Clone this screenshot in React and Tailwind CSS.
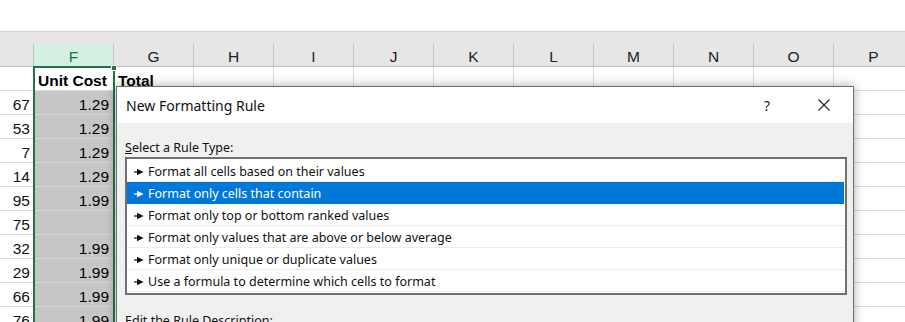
import React from "react";

const COLS = ["F", "G", "H", "I", "J", "K", "L", "M", "N", "O", "P"];
const ROWS = [
  ["67", "1.29"],
  ["53", "1.29"],
  ["7", "1.29"],
  ["14", "1.29"],
  ["95", "1.99"],
  ["75", ""],
  ["32", "1.99"],
  ["29", "1.99"],
  ["66", "1.99"],
  ["76", "1.99"],
];
const RULES = [
  "Format all cells based on their values",
  "Format only cells that contain",
  "Format only top or bottom ranked values",
  "Format only values that are above or below average",
  "Format only unique or duplicate values",
  "Use a formula to determine which cells to format",
];

function Arrow({ color }) {
  return (
    <svg width="10" height="8" viewBox="0 0 10 8" className="mr-[4px] shrink-0">
      <rect x="0" y="3.4" width="4" height="1.2" fill={color} />
      <polygon points="3,0.8 9.6,4 3,7.2" fill={color} />
    </svg>
  );
}

export default function App() {
  const sheetFont = { fontFamily: '"Liberation Sans", Arial, sans-serif' };
  const uiFont = { fontFamily: '"Noto Sans", "Open Sans", sans-serif' };
  return (
    <div className="relative h-[322px] w-[905px] overflow-hidden bg-white" style={sheetFont}>
      <div className="h-[31px] bg-white" />
      {/* column header band */}
      <div className="flex h-[36px] flex-col border-t border-[#d2d2d2] bg-[#e6e6e6]">
        <div className="h-[12px]" />
        <div className="flex h-[23px] border-b border-[#bdbdbd]">
          <div className="w-[33px] shrink-0" />
          {COLS.map((c, i) => (
            <div
              key={c}
              className={
                "flex w-[80px] shrink-0 items-center justify-center border-l pt-[3px] text-[15.5px] " +
                (i === 0
                  ? "border-[#bdbdbd] bg-[#d3f0e0] text-[#217346]"
                  : "border-[#c6c6c6] text-[#222]")
              }
            >
              {c}
            </div>
          ))}
        </div>
      </div>
      {/* header row */}
      <div className="flex h-[24px]">
        <div className="w-[33px] shrink-0 border-b border-[#dadada]" />
        <div className="flex w-[80px] shrink-0 items-center border-b border-l border-[#dadada] pl-[4px] pt-[4px] text-[15.5px] font-bold text-black">
          Unit Cost
        </div>
        <div className="flex w-[80px] shrink-0 items-center border-b border-l border-[#dadada] pl-[4px] pt-[4px] text-[15.5px] font-bold text-black">
          Total
        </div>
        {COLS.slice(2).map((c) => (
          <div key={c} className="w-[80px] shrink-0 border-b border-l border-[#dadada]" />
        ))}
      </div>
      {ROWS.map(([n, v], r) => (
        <div key={r} className="flex h-[24px]">
          <div className="flex w-[33px] shrink-0 items-center justify-end border-b border-[#dadada] pr-[3px] pt-[4px] text-[15.5px] text-[#111]">
            {n}
          </div>
          <div className="flex w-[80px] shrink-0 items-center justify-end border-b border-l border-[#d6d6d6] bg-[#c6c6c6] pr-[4px] pt-[4px] text-[15.5px] text-black">
            {v}
          </div>
          {COLS.slice(1).map((c) => (
            <div key={c} className="w-[80px] shrink-0 border-b border-l border-[#dadada]" />
          ))}
        </div>
      ))}

      {/* selection border */}
      <div className="absolute left-[33px] top-[66px] h-[300px] w-[82px] border-2 border-[#217346]" />
      <div className="absolute left-[111px] top-[65px] h-[6px] w-[6px] border border-white bg-[#217346]" />

      {/* dialog */}
      <div
        className="absolute left-[116px] top-[86px] h-[270px] w-[738px] border border-[#6f6f6f] bg-[#f0f0f0] shadow-[0_0_10px_rgba(0,0,0,0.35)]"
        style={uiFont}
      >
        <div className="flex h-[36px] items-center bg-white pl-[9px] text-[14px] text-[#111]">
          <span className="flex-1">New Formatting Rule</span>
          <span className="mr-[48px] text-[14px] text-[#222]">?</span>
          <svg width="12" height="12" viewBox="0 0 12 12" className="mr-[23px]">
            <path d="M0.5 0.5 L11.5 11.5 M11.5 0.5 L0.5 11.5" stroke="#222" strokeWidth="1.1" />
          </svg>
        </div>
        <div className="pl-[8px] pt-[16px]">
          <div className="h-[17px] text-[12.5px] leading-[17px] text-[#111]">
            <span className="underline">S</span>elect a Rule Type:
          </div>
          <div className="mt-[1px] w-[722px] border-2 border-[#707070] bg-white py-[1px]">
            {RULES.map((t, i) => (
              <div
                key={t}
                className={
                  "flex h-[22px] items-center border-b pl-[7px] pt-[3px] text-[12.5px] " +
                  (i === 1
                    ? "mr-[1px] border-[#0078d7] bg-[#0078d7] text-white"
                    : "border-[#ececec] text-[#111]")
                }
              >
                <Arrow color={i === 1 ? "#ffffff" : "#111111"} />
                <span>{t}</span>
              </div>
            ))}
          </div>
          <div className="mt-[17px] h-[17px] text-[12.5px] leading-[17px] text-[#111]">
            <span className="underline">E</span>dit the Rule Description:
          </div>
        </div>
      </div>
    </div>
  );
}
